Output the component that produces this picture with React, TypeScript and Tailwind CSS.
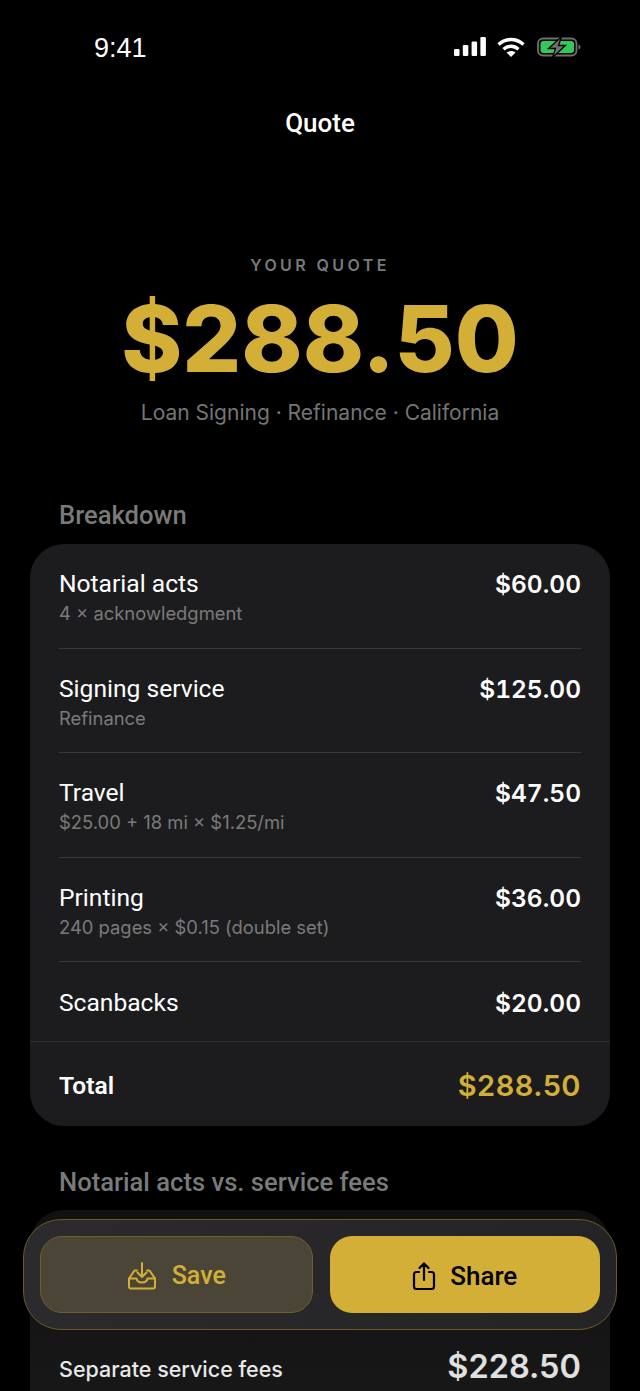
import React from "react";

const rows = [
  { name: "Notarial acts", desc: "4 × acknowledgment", price: "$60.00" },
  { name: "Signing service", desc: "Refinance", price: "$125.00" },
  { name: "Travel", desc: "$25.00 + 18 mi × $1.25/mi", price: "$47.50" },
  { name: "Printing", desc: "240 pages × $0.15 (double set)", price: "$36.00" },
];

const StatusIcons = () => (
  <div className="flex items-center gap-[11px]">
    <svg width="32" height="20" viewBox="0 0 32 20" fill="#fff">
      <rect x="0" y="12" width="5.5" height="7" rx="1.2" />
      <rect x="8.8" y="8" width="5.5" height="11" rx="1.2" />
      <rect x="17.6" y="4.5" width="5.5" height="14.5" rx="1.2" />
      <rect x="26.4" y="0" width="5.5" height="19" rx="1.2" />
    </svg>
    <svg width="28" height="20" viewBox="0 0 28 20" fill="none" stroke="#fff" strokeWidth="3.4">
      <path d="M1.5 7.5C9 0.8 19 0.8 26.5 7.5" />
      <path d="M6.5 12.2C11 8.3 17 8.3 21.5 12.2" />
      <path d="M14 20L9.5 15.6C12 13.6 16 13.6 18.5 15.6Z" fill="#fff" stroke="none" />
    </svg>
    <svg width="44" height="22" viewBox="0 0 44 22" fill="none" className="ml-px">
      <rect x="1" y="2.5" width="38.5" height="17" rx="5" stroke="#6f6f6f" strokeWidth="1.8" />
      <rect x="3.5" y="5" width="33.5" height="12" rx="3" fill="#34c759" />
      <path d="M41.5 8.5v5c1.3-.4 2-1.3 2-2.5s-.7-2.1-2-2.5Z" fill="#6f6f6f" />
      <path d="M24.5 0.8L11.5 12.5H18.5L15.5 21.4L28.5 9.5H21.5Z" fill="#6f6f6f" stroke="#000" strokeWidth="1.3" />
    </svg>
  </div>
);

const SaveIcon = () => (
  <svg width="30" height="30" viewBox="0 0 30 30" fill="none" stroke="#d4af37" strokeWidth="2" strokeLinecap="round" strokeLinejoin="round">
    <path d="M10 9.5H7.5L2 17.5V25.5C2 26.6 2.9 27.5 4 27.5H26C27.1 27.5 28 26.6 28 25.5V17.5L22.5 9.5H20" />
    <path d="M2 17.5H9.5C10 20 12 21.5 15 21.5C18 21.5 20 20 20.5 17.5H28" />
    <path d="M15 2V16M10.5 11.5L15 16L19.5 11.5" />
  </svg>
);

const ShareIcon = () => (
  <svg width="24" height="30" viewBox="0 0 24 30" fill="none" stroke="#000" strokeWidth="2.2" strokeLinecap="round" strokeLinejoin="round">
    <path d="M7 11H4.5C2.8 11 2 11.9 2 13.5V25.5C2 27.1 2.8 28 4.5 28H19.5C21.2 28 22 27.1 22 25.5V13.5C22 11.9 21.2 11 19.5 11H17" />
    <path d="M12 19V2.5M7.5 7L12 2.5L16.5 7" />
  </svg>
);

const App = () => {
  return (
    <div className="relative w-[640px] h-[1391px] overflow-hidden bg-black text-white font-['Inter',sans-serif]">
      <div className="flex items-center justify-between h-[20px] mt-[37px] pl-[94px] pr-[59px]">
        <span className="text-[27px] font-medium font-['Liberation_Sans',sans-serif] leading-none pt-[2px]">9:41</span>
        <StatusIcons />
      </div>

      <h1 className="text-center text-[26px] leading-[30px] font-medium font-['Roboto',sans-serif] mt-[51px]">Quote</h1>

      <div className="flex flex-col items-center mt-[117px]">
        <div className="text-[16px] leading-[20px] font-semibold tracking-[3.4px] text-[#7a7a7a]">YOUR QUOTE</div>
        <div className="text-[92.5px] leading-[100px] font-extrabold text-[#d4af37] mt-[13px]">$288.50</div>
        <div className="text-[21px] leading-[26px] text-[#757575] mt-[12px]">Loan Signing · Refinance · California</div>
      </div>

      <div className="px-[30px] mt-[74px]">
        <h2 className="pl-[29px] text-[25.6px] leading-[30px] font-medium font-['Roboto',sans-serif] text-[#7a7a7a]">Breakdown</h2>
        <div className="mt-[14px] rounded-[34px] bg-[#1c1c1e] overflow-hidden">
          <div className="px-[29px]">
            {rows.map((row) => (
              <div key={row.name} className="h-[104.5px] pt-[25px] border-b border-[#38383a] flex justify-between">
                <div>
                  <div className="text-[24.6px] leading-[30px] font-['Roboto',sans-serif]">{row.name}</div>
                  <div className="text-[18.4px] leading-[24px] text-[#7a7a7a] mt-[2px]">{row.desc}</div>
                </div>
                <div className="text-[24.5px] leading-[30px] font-semibold tabular-nums">{row.price}</div>
              </div>
            ))}
            <div className="h-[80px] pt-[26px] border-b border-[#38383a] flex justify-between">
              <div className="text-[24.6px] leading-[30px] font-['Roboto',sans-serif]">Scanbacks</div>
              <div className="text-[24.5px] leading-[30px] font-semibold tabular-nums">$20.00</div>
            </div>
          </div>
          <div className="h-[85px] px-[29px] pt-[29px] border-t border-[#2c2c2e] -mt-px flex justify-between">
            <div className="text-[24.6px] leading-[30px] font-semibold font-['Roboto',sans-serif]">Total</div>
            <div className="text-[29px] leading-[30px] font-semibold tracking-[0.5px] text-[#d4af37]">$288.50</div>
          </div>
        </div>

        <h2 className="pl-[29px] mt-[41px] text-[25.6px] leading-[30px] font-medium font-['Roboto',sans-serif] text-[#7a7a7a]">Notarial acts vs. service fees</h2>
        <div className="mt-[13px] h-[300px] rounded-[34px] bg-linear-to-b from-[#111111] to-[#1c1c1e] px-[29px] pt-[139px]">
          <div className="flex justify-between items-start">
            <div className="text-[21.5px] leading-[28px] font-medium text-[#e8e8e8] mt-[6px]">Separate service fees</div>
            <div className="text-[32.5px] leading-[36px] font-semibold text-[#e0e0e0]">$228.50</div>
          </div>
          <div className="text-[18.4px] leading-[24px] text-[#757575] mt-[1px]">Travel, printing, and add-ons. Not capped by law.</div>
        </div>
      </div>

      <div className="absolute left-[23px] top-[1219px] w-[594px] h-[111px] rounded-[38px] border border-[#6b5a26] bg-linear-to-r from-[#2b2b2d] to-[#242426] p-[16px] flex gap-[17px]">
        <button className="flex-1 rounded-[22px] border border-[#6f5f2a] bg-[#4a4536] flex items-center justify-center gap-[15px] pt-[3px] text-[25px] font-medium font-['Roboto',sans-serif] text-[#d4af37]">
          <SaveIcon />
          Save
        </button>
        <button className="flex-1 rounded-[22px] bg-[#d4af37] flex items-center justify-center gap-[14px] pt-[3px] text-[26px] font-medium font-['Roboto',sans-serif] text-black">
          <ShareIcon />
          Share
        </button>
      </div>
    </div>
  );
};

export default App;
